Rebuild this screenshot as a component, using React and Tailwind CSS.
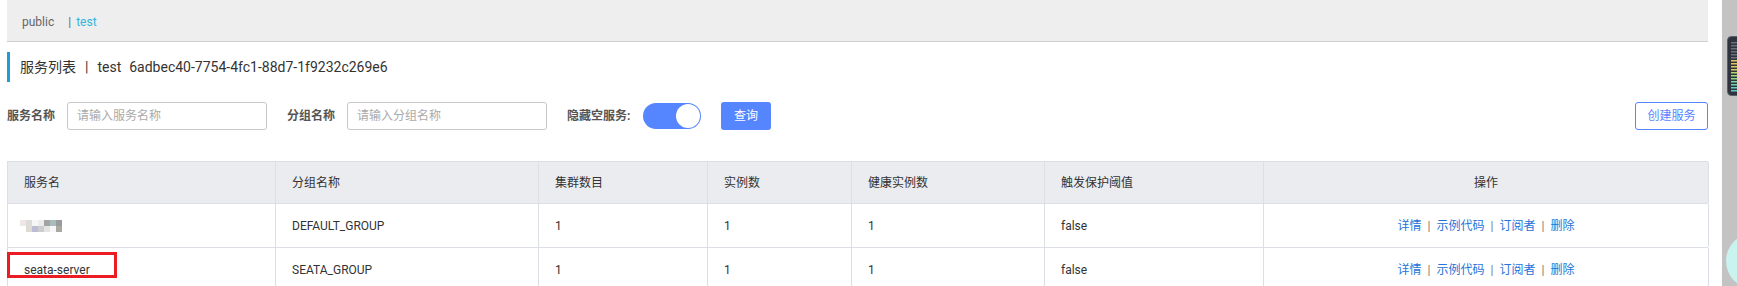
import React from "react";

const FONT = "font-[family-name:Roboto,'Noto_Sans_CJK_SC',sans-serif]";
const COLS = "grid grid-cols-[268px_263px_169px_144px_193px_219px_445px]";

function Mosaic() {
  const rows = [
    ["#efe6e6", "#dcdcdc", "#f6f6f6", "#ececec", "#a3a3a3", "#a9bcbc", "#9b9b9b"],
    ["#ffffff", "#dedcd2", "#bcbcd4", "#cdcdcd", "#e4e4e4", "#f7f7f7", "#a9a9a2"],
  ];
  return (
    <div className="flex flex-col">
      {rows.map((r, i) => (
        <div key={i} className="flex">
          {r.map((c, j) => (
            <div key={j} className="w-[6px] h-[6px]" style={{ background: c }} />
          ))}
        </div>
      ))}
    </div>
  );
}

function Actions() {
  return (
    <div className="flex items-center justify-center text-[12px] text-[#2573d9]">
      <span>详情</span>
      <span className="mx-[6px] text-[#777]">|</span>
      <span>示例代码</span>
      <span className="mx-[6px] text-[#777]">|</span>
      <span>订阅者</span>
      <span className="mx-[6px] text-[#777]">|</span>
      <span>删除</span>
    </div>
  );
}

function Meter() {
  const bars = [];
  const colors = [
    "#6b6f78", "#6b6f78", "#6b6f78", "#6b6f78", "#6b6f78", "#6b6f78",
    "#e3c35a", "#e3c35a", "#d9c95c", "#c9cf66", "#b6d46e", "#a3d67a",
    "#8fd88a", "#7ed69a", "#6fd3aa", "#66cfbb", "#5fcac8",
  ];
  colors.forEach((c, i) => {
    bars.push(<rect key={i} x="4" y={6 + i * 3} width="7" height="1.5" fill={c} />);
  });
  return (
    <svg width="14" height="60" viewBox="0 0 14 60">
      <rect x="0.5" y="0.5" width="16" height="59" rx="4" fill="#2e333d" stroke="#5a5f69" />
      {bars}
    </svg>
  );
}

export default function App() {
  const rows = [
    { name: null, group: "DEFAULT_GROUP" },
    { name: "seata-server", group: "SEATA_GROUP" },
  ];
  return (
    <div className={`${FONT} relative flex w-[1737px] h-[286px] overflow-hidden bg-white text-[#333]`}>
      <div className="w-[1722px] shrink-0 pl-[7px] pr-[14px]">
        {/* top bar */}
        <div className="h-[42px] bg-[#eeeeee] border-b border-[#cfcfcf] flex items-center pl-[15px] pt-[2px] text-[12px]">
          <span className="text-[#666]">public</span>
          <span className="ml-[14px] text-[#666]">|</span>
          <span className="ml-[5px] text-[#2fb6df]">test</span>
        </div>

        {/* title */}
        <div className="mt-[10px] h-[30px] border-l-[3px] border-[#1f9bd6] pl-[10px] flex items-center text-[14px] text-[#333]">
          <span>服务列表</span>
          <span className="mx-[9px]">|</span>
          <span>test</span>
          <span className="ml-[8px]">6adbec40-7754-4fc1-88d7-1f9232c269e6</span>
        </div>

        {/* filters */}
        <div className="mt-[20px] h-[28px] flex items-center text-[12px]">
          <span className="w-[60px] font-bold text-[#555]">服务名称</span>
          <div className="w-[200px] h-[28px] border border-[#c8c8c8] rounded-[3px] flex items-center pl-[9px] text-[#aaa]">
            请输入服务名称
          </div>
          <span className="ml-[20px] w-[60px] font-bold text-[#555]">分组名称</span>
          <div className="w-[200px] h-[28px] border border-[#c8c8c8] rounded-[3px] flex items-center pl-[9px] text-[#aaa]">
            请输入分组名称
          </div>
          <span className="ml-[20px] w-[76px] font-bold text-[#555]">隐藏空服务:</span>
          <div className="w-[58px] h-[26px] rounded-full bg-[#5585ff] flex items-center justify-end pr-[1px]">
            <div className="w-[24px] h-[24px] rounded-full bg-white" />
          </div>
          <div className="ml-[20px] w-[50px] h-[28px] rounded-[3px] bg-[#5585ff] text-white flex items-center justify-center">
            查询
          </div>
          <div className="ml-auto w-[73px] h-[28px] rounded-[3px] border border-[#5585ff] text-[#5585ff] flex items-center justify-center">
            创建服务
          </div>
        </div>

        {/* table */}
        <div className="mt-[31px] border-l border-t border-[#dcdfe6] text-[12px]">
          <div className={`${COLS} h-[42px] bg-[#ebecf0] border-b border-[#dcdfe6]`}>
            {["服务名", "分组名称", "集群数目", "实例数", "健康实例数", "触发保护阈值"].map((h) => (
              <div key={h} className="border-r border-[#dcdfe6] flex items-center pl-4">{h}</div>
            ))}
            <div className="border-r border-[#dcdfe6] flex items-center justify-center">操作</div>
          </div>
          {rows.map((r, i) => (
            <div key={i} className={`${COLS} h-[44px] border-b border-[#dcdfe6]`}>
              <div className="relative border-r border-[#dcdfe6] flex items-center pl-4">
                {r.name ? (
                  <>
                    <span>{r.name}</span>
                    <div className="absolute left-[-1px] top-[4px] w-[110px] h-[26px] border-[3px] border-[#ec1c24]" />
                  </>
                ) : (
                  <div className="-ml-[4px]"><Mosaic /></div>
                )}
              </div>
              <div className="border-r border-[#dcdfe6] flex items-center pl-4">{r.group}</div>
              <div className="border-r border-[#dcdfe6] flex items-center pl-4">1</div>
              <div className="border-r border-[#dcdfe6] flex items-center pl-4">1</div>
              <div className="border-r border-[#dcdfe6] flex items-center pl-4">1</div>
              <div className="border-r border-[#dcdfe6] flex items-center pl-4">false</div>
              <div className="border-r border-[#dcdfe6] flex items-center justify-center">
                <Actions />
              </div>
            </div>
          ))}
        </div>
      </div>

      {/* scrollbar */}
      <div className="w-[15px] shrink-0 bg-[#c3c3c3]" />

      {/* overlays */}
      <div className="absolute left-[1727px] top-[36px]">
        <Meter />
      </div>
      <div className="absolute left-[1726px] top-[233px] w-[56px] h-[56px] rounded-full bg-[#c9f3ee]" />
    </div>
  );
}
